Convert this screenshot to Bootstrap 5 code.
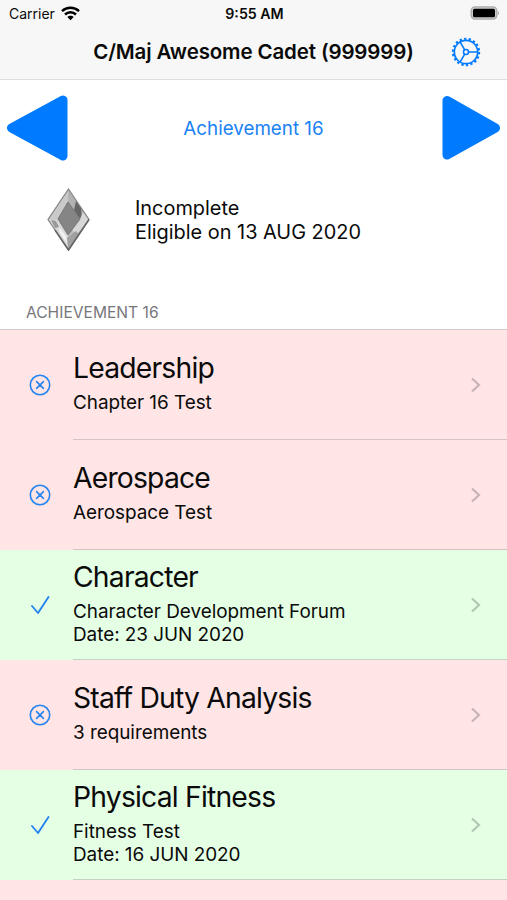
<!DOCTYPE html>
<html lang="en">
<head>
<meta charset="utf-8">
<meta name="viewport" content="width=device-width, initial-scale=1">
<title>Achievement 16</title>
<link href="https://cdn.jsdelivr.net/npm/bootstrap@5.3.0/dist/css/bootstrap.min.css" rel="stylesheet">
<style>
body{font-family:Inter,"Liberation Sans",sans-serif;color:#0a0a0a;background:#fff}
.screen{height:900px}
.topbar{background:#f7f7f7;height:80px;border-bottom:1px solid #dedede}
.status{height:27px;font-size:14px;padding:0 7px 0 9px}
.status>*{flex:1 1 0}
.carrier{gap:6px}
.clock{font-size:14.2px}
.title-row{height:50px;display:grid;grid-template-columns:70px 1fr 70px}
.title-text{font-size:20.5px;font-weight:600;letter-spacing:-.13px;padding-top:1px}
.pager{height:96px;padding:0 6px}
.ios-blue{color:#007aff}
.gear{margin-left:14px}
.pager-label{font-size:18.8px;color:#1a82f2;padding:2px 3px 0 0}
.summary{height:87px}
.summary-icon{width:135px;padding-left:1px}
.summary-text{font-size:19.9px;line-height:24.3px;padding-top:1px}
.section-title{height:66px;padding:0 26px 5px;font-size:15.6px;color:#77777b}
.ach-list{border-top:1px solid #d0cccc}
.ach{height:110px}
.ach-last{height:20px}
.ach-no{background:#ffe5e5}
.ach-yes{background:#e5ffe5}
.ach-icon{width:73px;padding-left:28px;color:#2584f0}
.ach-body{border-bottom:1px solid #d6c4c4;padding-right:25px}
.ach-yes .ach-body{border-bottom-color:#c4d2c4}
.ach-copy{padding-bottom:3px}
.ach-name{font-size:28.3px;line-height:35px;margin-bottom:5px;letter-spacing:-.8px}
.ach-sub{font-size:18.9px;line-height:23.4px;letter-spacing:-.03px}
.ach-no .chev{color:#c8b4b6}.ach-yes .chev{color:#b2c8b4}
svg{display:block;flex:none}
</style>
</head>
<body>
<div class="screen overflow-hidden">
<header class="topbar">
  <div class="status d-flex align-items-center">
    <div class="carrier d-flex align-items-center"><span>Carrier</span>
      <svg width="19" height="15" viewBox="0 0 19 15" fill="none" stroke="#000" stroke-width="2.5"><path d="M1 5.2C5.7.7 13.3.7 18 5.2"/><path d="M4 8.5C7.1 5.6 11.9 5.6 15 8.5"/><path d="M6.3 11.1C8 9.2 11 9.2 12.7 11.1L9.5 14.3Z" fill="#000" stroke="none"/></svg>
    </div>
    <div class="clock text-center fw-semibold">9:55 AM</div>
    <div class="d-flex justify-content-end">
      <svg width="31" height="15" viewBox="0 0 31 15"><rect x="2.2" y=".9" width="25.6" height="12.2" rx="3.8" fill="#ccc" stroke="#aaa" stroke-width="1.4"/><rect x="4" y="2.7" width="22" height="8.6" rx="1.6" fill="#000"/><path d="M29 4.7Q31 7 29 9.3Z" fill="#aaa"/></svg>
    </div>
  </div>
  <div class="title-row align-items-center">
    <span></span>
    <div class="title-text text-center text-nowrap">C/Maj Awesome Cadet (999999)</div>
    <svg class="ios-blue gear" width="30" height="30" viewBox="-15 -15 30 30" fill="none" stroke="currentColor"><circle r="11.7" stroke-width="1.7"/><circle r="13.2" stroke-width="2" stroke-dasharray="2.3 2.308"/><circle r="2.5" stroke-width="1.5"/><path d="M2.5 0H11.5M-1.3 -2.2L-5.9 -10.2M-1.3 2.2L-5.9 10.2" stroke-width="1.6"/></svg>
  </div>
</header>
<main>
  <div class="pager d-flex align-items-center justify-content-between">
    <svg class="ios-blue" width="62" height="66" viewBox="0 0 62 66"><path d="M5.5 33L57 5V61Z" fill="currentColor" stroke="currentColor" stroke-width="9" stroke-linejoin="round"/></svg>
    <div class="pager-label">Achievement 16</div>
    <svg class="ios-blue" width="59" height="66" viewBox="0 0 59 66"><path d="M53.5 33L5 5.5V60Z" fill="currentColor" stroke="currentColor" stroke-width="9" stroke-linejoin="round"/></svg>
  </div>
  <div class="summary d-flex align-items-center">
    <div class="summary-icon d-flex justify-content-center">
      <svg width="43" height="63" viewBox="0 0 43 63">
        <path d="M21.5 1L42 31.5 21.5 62 1 31.5Z" fill="#bbb"/>
        <path d="M21.5 1L1 31.5 11 31.5 21 14Z" fill="#c9c9c9"/>
        <path d="M1 31.5L11 31.5 21 47 21.5 62Z" fill="#d8d8d8"/>
        <path d="M21.5 1L42 31.5H33L21 14Z" fill="#b2b2b2"/>
        <path d="M29 13L34 20 35 29 33 31 27 22Z" fill="#666"/>
        <path d="M36 24L42 31.5 30 46 25 42 33 31Z" fill="#d7d7d7"/>
        <path d="M29 43L32 46 21.5 62 20 50Z" fill="#a0a0a0"/>
        <path d="M4 32L9 33 12 39 8 40Z" fill="#999"/>
        <path d="M12 39L19 48 20 56 13 45Z" fill="#f1f1f1"/>
        <path d="M21 14L33 31 21 47 11 31Z" fill="#858585" stroke="#777"/>
        <path d="M21.5 1L42 31.5 21.5 62 1 31.5Z" fill="none" stroke="#858585" stroke-width="1.2"/>
        <path d="M42 31.5L21.5 62 8 42" fill="none" stroke="#666" stroke-width="1.6"/>
      </svg>
    </div>
    <div class="summary-text">Incomplete<br>Eligible on 13 AUG 2020</div>
  </div>
  <div class="section-title d-flex align-items-end">ACHIEVEMENT 16</div>
  <div class="ach-list">
    <div class="ach ach-no d-flex">
      <div class="ach-icon d-flex align-items-center"><svg width="24" height="24" viewBox="0 0 24 24" fill="none" stroke="currentColor" stroke-width="1.6" stroke-linecap="round"><circle cx="12" cy="12" r="9.7"/><path d="M8.6 8.6L15.4 15.4M15.4 8.6L8.6 15.4"/></svg></div>
      <div class="ach-body d-flex flex-grow-1 align-items-center justify-content-between"><div class="ach-copy"><div class="ach-name">Leadership</div><div class="ach-sub">Chapter 16 Test</div></div><svg class="chev" width="12" height="16" viewBox="0 0 12 16" fill="none" stroke="currentColor" stroke-width="2.2"><path d="M2 1.5L9 8 2 14.5"/></svg></div>
    </div>
    <div class="ach ach-no d-flex">
      <div class="ach-icon d-flex align-items-center"><svg width="24" height="24" viewBox="0 0 24 24" fill="none" stroke="currentColor" stroke-width="1.6" stroke-linecap="round"><circle cx="12" cy="12" r="9.7"/><path d="M8.6 8.6L15.4 15.4M15.4 8.6L8.6 15.4"/></svg></div>
      <div class="ach-body d-flex flex-grow-1 align-items-center justify-content-between"><div class="ach-copy"><div class="ach-name">Aerospace</div><div class="ach-sub">Aerospace Test</div></div><svg class="chev" width="12" height="16" viewBox="0 0 12 16" fill="none" stroke="currentColor" stroke-width="2.2"><path d="M2 1.5L9 8 2 14.5"/></svg></div>
    </div>
    <div class="ach ach-yes d-flex">
      <div class="ach-icon d-flex align-items-center"><svg width="24" height="24" viewBox="0 0 24 24" fill="none" stroke="currentColor" stroke-width="1.9" stroke-linecap="round" stroke-linejoin="round"><path d="M4 13L10 20 20.5 4"/></svg></div>
      <div class="ach-body d-flex flex-grow-1 align-items-center justify-content-between"><div class="ach-copy"><div class="ach-name">Character</div><div class="ach-sub">Character Development Forum<br>Date: 23 JUN 2020</div></div><svg class="chev" width="12" height="16" viewBox="0 0 12 16" fill="none" stroke="currentColor" stroke-width="2.2"><path d="M2 1.5L9 8 2 14.5"/></svg></div>
    </div>
    <div class="ach ach-no d-flex">
      <div class="ach-icon d-flex align-items-center"><svg width="24" height="24" viewBox="0 0 24 24" fill="none" stroke="currentColor" stroke-width="1.6" stroke-linecap="round"><circle cx="12" cy="12" r="9.7"/><path d="M8.6 8.6L15.4 15.4M15.4 8.6L8.6 15.4"/></svg></div>
      <div class="ach-body d-flex flex-grow-1 align-items-center justify-content-between"><div class="ach-copy"><div class="ach-name">Staff Duty Analysis</div><div class="ach-sub">3 requirements</div></div><svg class="chev" width="12" height="16" viewBox="0 0 12 16" fill="none" stroke="currentColor" stroke-width="2.2"><path d="M2 1.5L9 8 2 14.5"/></svg></div>
    </div>
    <div class="ach ach-yes d-flex">
      <div class="ach-icon d-flex align-items-center"><svg width="24" height="24" viewBox="0 0 24 24" fill="none" stroke="currentColor" stroke-width="1.9" stroke-linecap="round" stroke-linejoin="round"><path d="M4 13L10 20 20.5 4"/></svg></div>
      <div class="ach-body d-flex flex-grow-1 align-items-center justify-content-between"><div class="ach-copy"><div class="ach-name">Physical Fitness</div><div class="ach-sub">Fitness Test<br>Date: 16 JUN 2020</div></div><svg class="chev" width="12" height="16" viewBox="0 0 12 16" fill="none" stroke="currentColor" stroke-width="2.2"><path d="M2 1.5L9 8 2 14.5"/></svg></div>
    </div>
    <div class="ach-last ach-no"></div>
  </div>
</main>
</div>
<script src="https://cdn.jsdelivr.net/npm/bootstrap@5.3.0/dist/js/bootstrap.bundle.min.js"></script>
</body>
</html>
